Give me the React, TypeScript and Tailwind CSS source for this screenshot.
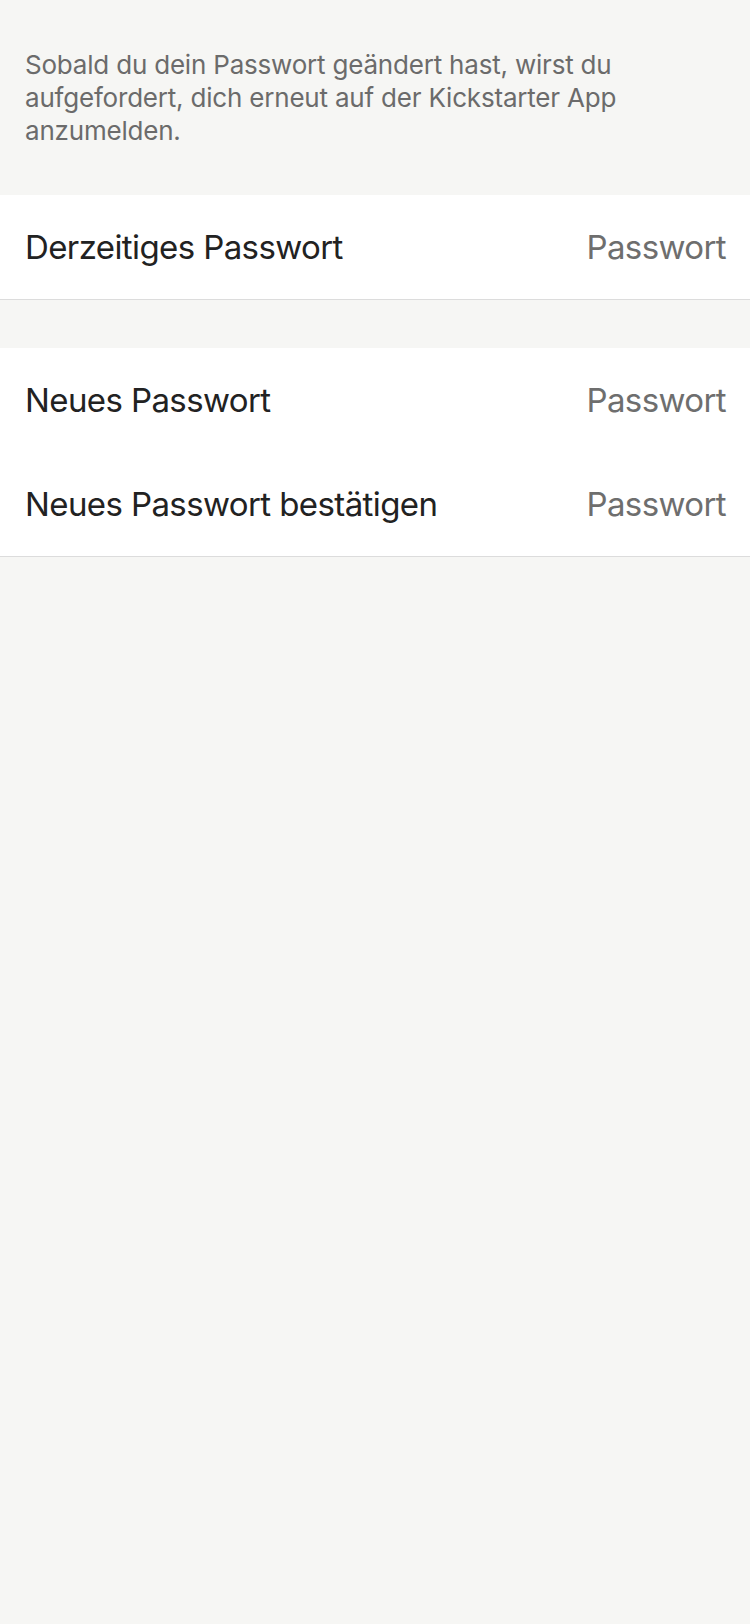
const ROWS_NEW = ['Neues Passwort', 'Neues Passwort bestätigen'];

function Row({ label }: { label: string }) {
  return (
    <div className="flex h-[104px] items-center justify-between pt-[2px] pl-[25px] pr-[24px] text-[33px] tracking-[-0.6px]">
      <span className="text-[#222222]">{label}</span>
      <span className="text-[#6e6e6e]">Passwort</span>
    </div>
  );
}

export default function App() {
  return (
    <div
      className="min-h-[1624px] w-[750px] bg-[#f6f6f4]"
      style={{ fontFamily: 'Inter, "Noto Sans", sans-serif' }}
    >
      {/* Hinweis */}
      <div className="px-[25px] pt-[48px] pb-[48px]">
        <p className="text-[26px] leading-[33px] tracking-[-0.2px] text-[#6b6b6b]">
          Sobald du dein Passwort geändert hast, wirst du aufgefordert, dich erneut auf der Kickstarter App anzumelden.
        </p>
      </div>

      <div className="border-b border-[#dcdcdc] bg-white">
        <Row label="Derzeitiges Passwort" />
      </div>

      <div className="h-[48px]" />

      <div className="border-b border-[#dcdcdc] bg-white">
        {ROWS_NEW.map((r) => (
          <Row key={r} label={r} />
        ))}
      </div>
    </div>
  );
}
